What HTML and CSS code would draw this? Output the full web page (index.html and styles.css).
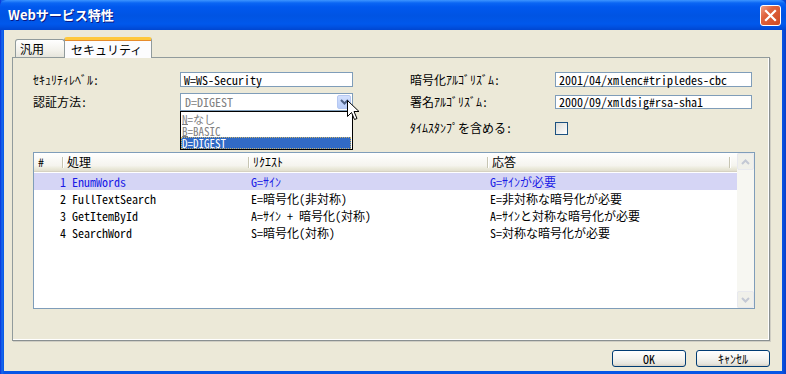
FILE: index.html
```html
<!DOCTYPE html>
<html lang="ja">
<head>
    <meta charset="UTF-8">
    <title>Webサービス特性</title>
    <link rel="stylesheet" href="styles.css">
</head>
<body>
    <div class="window">
        <div class="titlebar">
            <span class="title">Webサービス特性</span>
            <span class="close">
                <svg width="13" height="13" viewBox="0 0 13 13">
                    <path d="M2 2 L11 11 M11 2 L2 11" stroke="#fff" stroke-width="2.2" stroke-linecap="square"/>
                </svg>
            </span>
        </div>

        <div class="client">
            <div class="tabs">
                <div class="tab">汎用</div>
                <div class="tab active">セキュリティ</div>
            </div>

            <div class="panel">
                <!-- 上段のフォーム -->
                <div class="form-row row1">
                    <label>ｾｷｭﾘﾃｨﾚﾍﾞﾙ:</label>
                    <div class="field">W=WS-Security</div>
                    <span></span>
                    <label>暗号化ｱﾙｺﾞﾘｽﾞﾑ:</label>
                    <div class="field">2001/04/xmlenc#tripledes-cbc</div>
                </div>
                <div class="form-row row2">
                    <label>認証方法:</label>
                    <div class="combo">
                        <span class="combo-text">D=DIGEST</span>
                        <span class="combo-btn">
                            <svg width="9" height="6" viewBox="0 0 9 6">
                                <path d="M1 1 L4.5 4.5 L8 1" fill="none" stroke="#4d6185" stroke-width="2"/>
                            </svg>
                        </span>
                        <div class="droplist">
                            <div class="item ul">N=なし</div>
                            <div class="item ul">B=BASIC</div>
                            <div class="item selected">D=DIGEST</div>
                        </div>
                        <svg class="cursor" width="13" height="21" viewBox="0 0 13 21">
                            <path d="M0.5 0.5 L0.5 16.5 L4.5 12.5 L7.5 19.5 L10 18.5 L7 11.5 L12 11.5 Z" fill="#fff" stroke="#000" stroke-width="1"/>
                        </svg>
                    </div>
                    <span></span>
                    <label>署名ｱﾙｺﾞﾘｽﾞﾑ:</label>
                    <div class="field short">2000/09/xmldsig#rsa-sha1</div>
                </div>
                <div class="form-row row3">
                    <span></span>
                    <span></span>
                    <span></span>
                    <label>ﾀｲﾑｽﾀﾝﾌﾟを含める:</label>
                    <div><span class="check"></span></div>
                </div>

                <!-- 処理一覧 -->
                <div class="listview">
                    <div class="list-main">
                        <div class="list-head">
                            <div class="hcell">#</div>
                            <div class="hcell">処理</div>
                            <div class="hcell">ﾘｸｴｽﾄ</div>
                            <div class="hcell">応答</div>
                            <div class="hcell last"></div>
                        </div>
                        <div class="list-row hot">
                            <div class="num">1</div>
                            <div class="name">EnumWords</div>
                            <div class="req">G=ｻｲﾝ</div>
                            <div class="res">G=ｻｲﾝが必要</div>
                        </div>
                        <div class="list-row">
                            <div class="num">2</div>
                            <div class="name">FullTextSearch</div>
                            <div class="req">E=暗号化(非対称)</div>
                            <div class="res">E=非対称な暗号化が必要</div>
                        </div>
                        <div class="list-row">
                            <div class="num">3</div>
                            <div class="name">GetItemById</div>
                            <div class="req">A=ｻｲﾝ + 暗号化(対称)</div>
                            <div class="res">A=ｻｲﾝと対称な暗号化が必要</div>
                        </div>
                        <div class="list-row">
                            <div class="num">4</div>
                            <div class="name">SearchWord</div>
                            <div class="req">S=暗号化(対称)</div>
                            <div class="res">S=対称な暗号化が必要</div>
                        </div>
                    </div>
                    <div class="scrollbar">
                        <div class="sb-btn">
                            <svg width="9" height="6" viewBox="0 0 9 6"><path d="M1 5 L4.5 1.5 L8 5" fill="none" stroke="#c3c8d4" stroke-width="2"/></svg>
                        </div>
                        <div class="sb-track"></div>
                        <div class="sb-btn">
                            <svg width="9" height="6" viewBox="0 0 9 6"><path d="M1 1 L4.5 4.5 L8 1" fill="none" stroke="#c3c8d4" stroke-width="2"/></svg>
                        </div>
                    </div>
                </div>
            </div>

            <div class="buttons">
                <button class="btn">OK</button>
                <button class="btn">ｷｬﾝｾﾙ</button>
            </div>
        </div>
    </div>
</body>
</html>
```

FILE: styles.css
```css
body {
    margin: 0;
    padding: 0;
    font-family: "Noto Sans Mono CJK JP", "Noto Sans CJK JP", monospace;
    font-size: 12px;
    color: #000;
    background: #ece9d8;
}
.window {
    width: 786px;
    height: 374px;
    display: flex;
    flex-direction: column;
    background: linear-gradient(90deg, #0831d9 0, #166aee 2px, #0655e6 4px, #0655e6 782px, #0a3fc8 786px);
}
.titlebar {
    height: 30px;
    flex: none;
    display: flex;
    align-items: center;
    justify-content: space-between;
    padding: 0 5px 0 8px;
    background: linear-gradient(#3d95ff 0, #0a66f4 3px, #0058ee 7px, #0054e3 16px, #0058ec 24px, #0050e0 27px, #0046d0 30px);
    border-radius: 6px 6px 0 0;
}
.title {
    font-family: "Noto Sans CJK JP", sans-serif;
    font-weight: bold;
    font-size: 13px;
    color: #fff;
    text-shadow: 1px 1px 0 #0a1883;
    margin-top: -1px;
}
.close {
    width: 19px;
    height: 19px;
    border: 1px solid #fff;
    border-radius: 3px;
    background: linear-gradient(135deg, #f0a188 0, #e0633e 35%, #cc4a22 100%);
    display: flex;
    align-items: center;
    justify-content: center;
    margin-top: 1px;
}
.client {
    flex: 1;
    margin: 0 4px 3px 4px;
    background: #ece9d8;
    padding: 7px 12px 0 8px;
    display: flex;
    flex-direction: column;
}
.tabs {
    display: flex;
    align-items: flex-end;
    height: 21px;
    padding-left: 3px;
    margin-bottom: -1px;
    position: relative;
    z-index: 1;
}
.tab {
    height: 17px;
    width: 44px;
    border: 1px solid #919b9c;
    border-bottom: none;
    border-radius: 3px 3px 0 0;
    background: linear-gradient(#fff, #f3f2ec 60%, #e6e5dc);
    padding-left: 4px;
    line-height: 17px;
    box-sizing: content-box;
    font-family: "Noto Sans CJK JP", sans-serif;
    margin-bottom: 1px;
}
.tab.active {
    width: 80px;
    height: 18px;
    padding-left: 6px;
    border-top: 3px solid #ffc83c;
    border-radius: 3px 3px 0 0;
    background: #fcfcfe;
    margin-bottom: 0;
    margin-left: -1px;
    line-height: 19px;
    box-shadow: inset 0 1px 0 #e68b2c;
}
.panel {
    height: 284px;
    box-sizing: border-box;
    border: 1px solid #919b9c;
    border-right-color: #8a9091;
    border-bottom-color: #8a9091;
    box-shadow: inset -1px -1px 0 #fff, 1px 1px 0 #d0cec4;
    background: #ece9d8;
    padding: 14px 14px 0 20px;
}
.form-row {
    display: grid;
    grid-template-columns: 147px 173px 57px 145px 197px;
    align-items: center;
}
.row1 {
    height: 15px;
    margin-bottom: 6px;
}
.row2 {
    height: 18px;
    margin-bottom: 10px;
}
.row3 {
    height: 13px;
}
.form-row label {
    white-space: nowrap;
    line-height: 14px;
}
.field {
    height: 15px;
    box-sizing: border-box;
    border: 1px solid #7f9db9;
    background: #fff;
    padding: 0 3px;
    line-height: 13px;
    white-space: nowrap;
}
.field.short {
    height: 14px;
    line-height: 12px;
}
.combo {
    position: relative;
    height: 18px;
    box-sizing: border-box;
    border: 1px solid #7f9db9;
    background: #fff;
    display: flex;
    align-items: center;
    justify-content: space-between;
    padding: 0 1px 0 4px;
}
.combo-text {
    color: #808080;
    line-height: 14px;
}
.combo-btn {
    width: 14px;
    height: 14px;
    background: linear-gradient(#d3e0fd, #b8cdf9);
    border: 1px solid #b6c8f2;
    border-radius: 2px;
    box-sizing: border-box;
    display: flex;
    align-items: center;
    justify-content: center;
}
.droplist {
    position: absolute;
    left: -1px;
    top: 17px;
    width: 173px;
    height: 39px;
    box-sizing: border-box;
    border: 1px solid #000;
    background: #fff;
    z-index: 5;
    padding-top: 1px;
}
.item {
    position: relative;
    height: 12px;
    line-height: 12px;
    font-size: 11px;
    color: #808080;
    padding-left: 1px;
}
.item.ul::before {
    content: "";
    position: absolute;
    left: 1px;
    bottom: 0;
    width: 6px;
    height: 1px;
    background: #808080;
}
.item.selected {
    background: #316ac5;
    color: #fff;
    outline: 1px dotted #c9b36c;
    outline-offset: -1px;
    margin-right: 1px;
}
.cursor {
    position: absolute;
    left: 166px;
    top: 6px;
    z-index: 6;
}
.check {
    display: block;
    width: 13px;
    height: 13px;
    box-sizing: border-box;
    border: 1px solid #1c5180;
    background: linear-gradient(135deg, #dcdcd7, #fff);
}
.listview {
    margin-top: 18px;
    width: 722px;
    height: 157px;
    box-sizing: border-box;
    border: 1px solid #7f9db9;
    background: #fff;
    display: flex;
}
.list-main {
    flex: 1;
}
.list-head {
    height: 18px;
    display: grid;
    grid-template-columns: 29px 186px 239px 242px 1fr;
    background: linear-gradient(#fff 0, #f5f4ee 70%, #ebeadb 85%, #e2dfcf 100%);
    border-bottom: 1px solid #d6d2c2;
}
.hcell {
    position: relative;
    line-height: 18px;
    padding-left: 4px;
}
.hcell::after {
    content: "";
    position: absolute;
    right: 0;
    top: 4px;
    height: 11px;
    width: 1px;
    background: #c7c5b2;
    box-shadow: 1px 0 0 #fff;
}
.hcell.last::after {
    display: none;
}
.list-row {
    height: 17px;
    display: grid;
    grid-template-columns: 32px 183px 239px 242px;
    align-items: center;
    white-space: nowrap;
    line-height: 17px;
}
.list-head + .list-row {
    margin-top: 1px;
}
.list-row.hot {
    background: #d5d5f5;
    color: #1a1ae6;
}
.num {
    text-align: right;
}
.name {
    padding-left: 6px;
}
.req {
    padding-left: 2px;
}
.res {
    padding-left: 2px;
}
.scrollbar {
    width: 17px;
    display: flex;
    flex-direction: column;
    background: #f7f7f2;
}
.sb-btn {
    height: 17px;
    box-sizing: border-box;
    border: 1px solid #e8e9ee;
    border-radius: 2px;
    background: #f0f0ea;
    display: flex;
    align-items: center;
    justify-content: center;
}
.sb-track {
    flex: 1;
}
.buttons {
    display: flex;
    justify-content: flex-end;
    gap: 10px;
    margin-top: 9px;
}
.btn {
    width: 74px;
    height: 17px;
    padding: 0;
    font-family: "Noto Sans Mono CJK JP", "Noto Sans CJK JP", monospace;
    font-size: 12px;
    font-weight: normal;
    line-height: 14px;
    color: #000;
    border: 1px solid #003c74;
    border-radius: 3px;
    background: linear-gradient(#fff 0, #f4f4f0 50%, #e6e5de 85%, #d6d0c5 100%);
}
```
